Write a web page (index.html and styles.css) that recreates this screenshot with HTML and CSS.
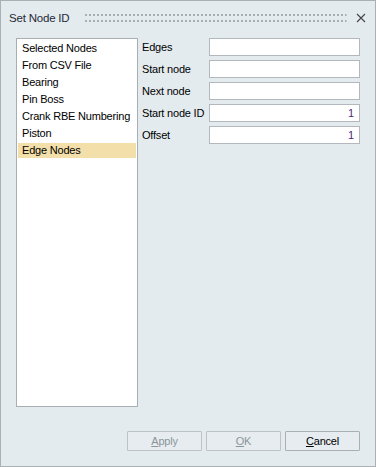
FILE: index.html
```html
<!DOCTYPE html>
<html lang="en">
<head>
    <meta charset="UTF-8">
    <title>Set Node ID</title>
    <link rel="stylesheet" href="styles.css">
</head>
<body>
    <div class="window">
        <!-- title bar -->
        <div class="titlebar">
            <span class="title">Set Node ID</span>
            <svg class="grip" height="9">
                <defs>
                    <pattern id="dots" width="4" height="6" patternUnits="userSpaceOnUse">
                        <rect x="0" y="0" width="2" height="2" fill="#a7afb5"/>
                    </pattern>
                </defs>
                <rect width="100%" height="8" fill="url(#dots)"/>
            </svg>
            <svg class="close" width="10" height="10" viewBox="0 0 10 10">
                <path d="M1 1 L9 9 M9 1 L1 9" stroke="#444" stroke-width="1.1" fill="none"/>
            </svg>
        </div>

        <div class="content">
            <ul class="list">
                <li>Selected Nodes</li>
                <li>From CSV File</li>
                <li>Bearing</li>
                <li>Pin Boss</li>
                <li>Crank RBE Numbering</li>
                <li>Piston</li>
                <li class="selected">Edge Nodes</li>
            </ul>

            <div class="form">
                <div class="row">
                    <label>Edges</label>
                    <input type="text" value="">
                </div>
                <div class="row">
                    <label>Start node</label>
                    <input type="text" value="">
                </div>
                <div class="row">
                    <label>Next node</label>
                    <input type="text" value="">
                </div>
                <div class="row">
                    <label>Start node ID</label>
                    <input type="text" class="num" value="1">
                </div>
                <div class="row">
                    <label>Offset</label>
                    <input type="text" class="num" value="1">
                </div>
            </div>
        </div>

        <div class="buttons">
            <button class="disabled"><u>A</u>pply</button>
            <button class="disabled"><u>O</u>K</button>
            <button><u>C</u>ancel</button>
        </div>
    </div>
</body>
</html>
```

FILE: styles.css
```css
body {
    margin: 0;
    font-family: "Liberation Sans", Arial, sans-serif;
    font-size: 11px;
    letter-spacing: -0.2px;
    color: #000;
}

.window {
    width: 376px;
    height: 467px;
    box-sizing: border-box;
    border: 1px solid #abb0b4;
    background-color: #e4ebef;
    display: flex;
    flex-direction: column;
    padding: 0 15px 15px 15px;
}

.titlebar {
    height: 34px;
    margin: 0 -6px 3px -8px;
    display: flex;
    align-items: center;
    padding-left: 1px;
}

.title {
    font-size: 11.5px;
    color: #1e2a36;
}

.grip {
    flex: 1;
    margin: 1px 9px 0 16px;
}

.close {
    margin-right: 0;
}

.content {
    display: flex;
    flex: 1;
}

.list {
    list-style: none;
    margin: 0;
    padding: 1px 1px;
    width: 122px;
    height: 369px;
    box-sizing: border-box;
    background-color: #fff;
    border: 1px solid #a9aeb2;
}

.list li {
    height: 15px;
    line-height: 15px;
    margin: 1px 0 2px 0;
    padding-left: 4px;
}

.list li.selected {
    background-color: #f3dfa9;
}

.form {
    margin-left: 4px;
    flex: 1;
    display: flex;
    flex-direction: column;
    gap: 4px;
}

.row {
    display: flex;
    align-items: center;
    height: 18px;
}

.row label {
    width: 67px;
    white-space: nowrap;
}

.row input {
    width: 151px;
    height: 18px;
    box-sizing: border-box;
    border: 1px solid #b3b8bc;
    background-color: #fff;
    margin: 0;
    padding: 0 5px;
    font-family: inherit;
    font-size: 11px;
    outline: none;
}

.row input.num {
    text-align: right;
    color: #4a2a78;
}

.buttons {
    display: flex;
    justify-content: flex-end;
    gap: 4px;
    margin-top: 24px;
}

.buttons button {
    width: 75px;
    height: 20px;
    margin: 0;
    padding: 0;
    border: 1px solid #a9afb3;
    border-radius: 1px;
    background-color: #e6ecf0;
    font-family: inherit;
    font-size: 11px;
    letter-spacing: -0.2px;
    color: #000;
}

.buttons button.disabled {
    color: #8c959a;
    border-color: #bcc2c6;
}
```
